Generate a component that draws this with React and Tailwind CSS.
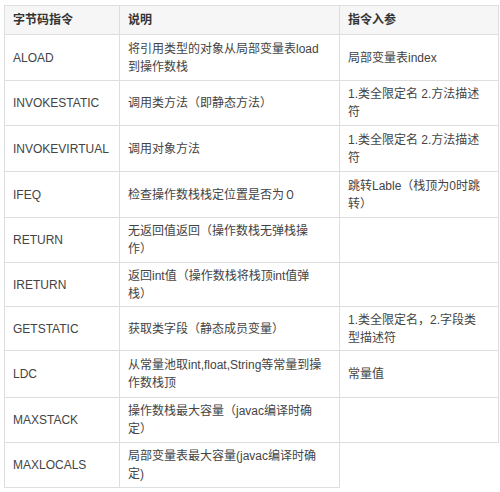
import React from "react";

const rows = [
  { op: "ALOAD", h: "h-[46px]", desc: ["将引用类型的对象从局部变量表load", "到操作数栈"], arg: ["局部变量表index"] },
  { op: "INVOKESTATIC", h: "h-[45px]", desc: ["调用类方法（即静态方法）"], arg: ["1.类全限定名 2.方法描述", "符"] },
  { op: "INVOKEVIRTUAL", h: "h-[46px]", desc: ["调用对象方法"], arg: ["1.类全限定名 2.方法描述", "符"] },
  { op: "IFEQ", h: "h-[46px]", desc: ["检查操作数栈栈定位置是否为０"], arg: ["跳转Lable（栈顶为0时跳", "转）"] },
  { op: "RETURN", h: "h-[45px]", desc: ["无返回值返回（操作数栈无弹栈操", "作）"], arg: [] },
  { op: "IRETURN", h: "h-[44px]", desc: ["返回int值（操作数栈将栈顶int值弹", "栈）"], arg: [] },
  { op: "GETSTATIC", h: "h-[44px]", desc: ["获取类字段（静态成员变量）"], arg: ["1.类全限定名，2.字段类", "型描述符"] },
  { op: "LDC", h: "h-[47px]", desc: ["从常量池取int,float,String等常量到操", "作数栈顶"], arg: ["常量值"] },
  { op: "MAXSTACK", h: "h-[45px]", desc: ["操作数栈最大容量（javac编译时确", "定）"], arg: [] },
  { op: "MAXLOCALS", h: "h-[45px]", desc: ["局部变量表最大容量(javac编译时确", "定)"], arg: null },
];

function Lines({ lines }) {
  return lines.map((l, i) => (
    <div key={i} className="whitespace-nowrap">
      {l}
    </div>
  ));
}

export default function App() {
  return (
    <div
      className="min-h-screen bg-white pl-[4px] pt-[5px] text-[12px] leading-[18px] text-[#444]"
      style={{ fontFamily: '"Liberation Sans", "Noto Sans CJK SC", sans-serif' }}
    >
      <table className="w-[494px] table-fixed border-collapse">
        <colgroup>
          <col className="w-[115px]" />
          <col className="w-[220px]" />
          <col className="w-[159px]" />
        </colgroup>
        <thead>
          <tr className="bg-[#f6f6f6]">
            <th className="h-[29px] border border-[#dedede] px-[8px] text-left align-middle font-bold text-[#333]">
              字节码指令
            </th>
            <th className="border border-[#dedede] px-[8px] text-left align-middle font-bold text-[#333]">
              说明
            </th>
            <th className="border border-[#dedede] px-[8px] text-left align-middle font-bold text-[#333]">
              指令入参
            </th>
          </tr>
        </thead>
        <tbody>
          {rows.map((r) => (
            <tr key={r.op}>
              <td className={`${r.h} border border-[#dedede] px-[8px] align-middle`}>
                {r.op}
              </td>
              <td className="border border-[#dedede] px-[8px] align-middle">
                <Lines lines={r.desc} />
              </td>
              {r.arg && (
                <td className="border border-[#dedede] px-[8px] align-middle">
                  <Lines lines={r.arg} />
                </td>
              )}
            </tr>
          ))}
        </tbody>
      </table>
    </div>
  );
}
